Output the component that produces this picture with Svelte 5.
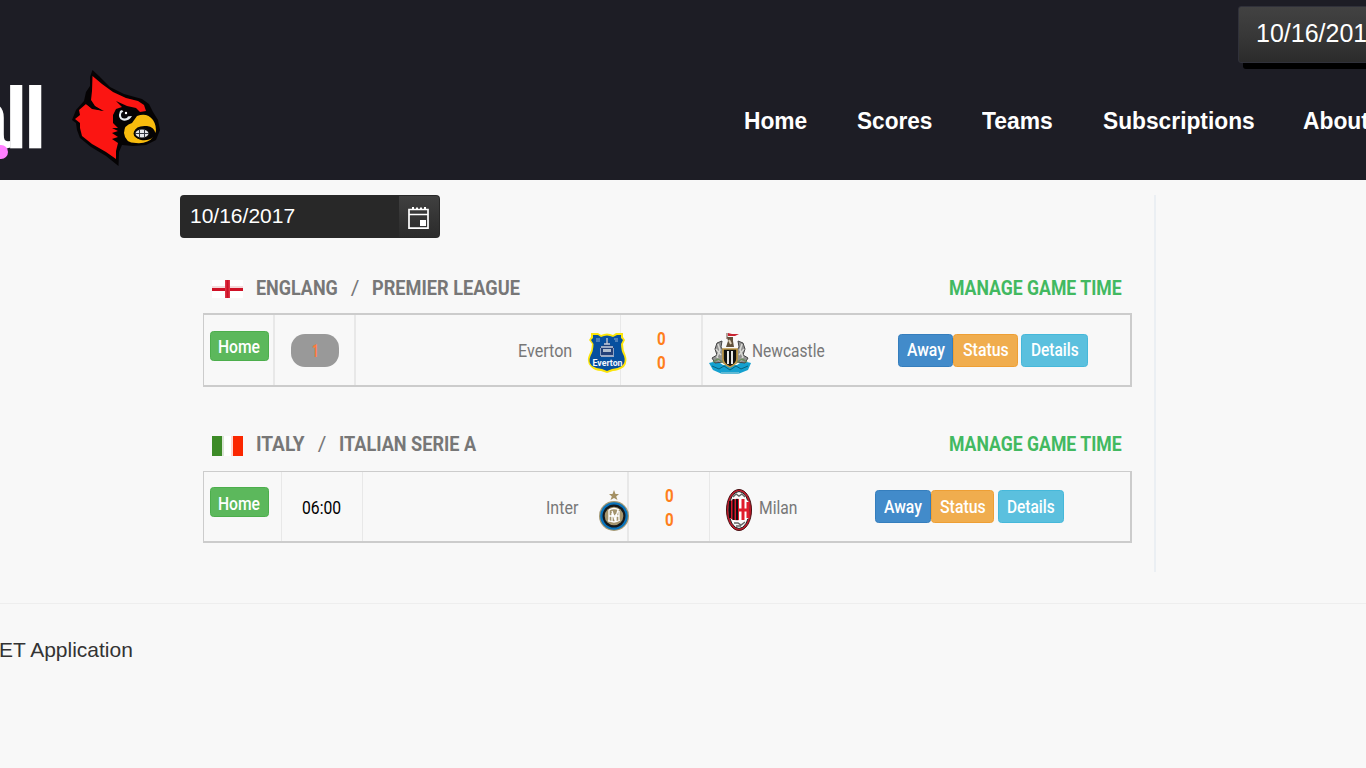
<script>
  // Condenses a label horizontally so that it fills its box exactly.
  function fit(node) {
    const box = node.parentElement.clientWidth;
    const natural = node.offsetWidth;
    if (natural) node.style.transform = `scaleX(${box / natural})`;
  }

  const nav = [
    { text: 'Home', w: 63, gap: 50 },
    { text: 'Scores', w: 75, gap: 50 },
    { text: 'Teams', w: 71, gap: 50 },
    { text: 'Subscriptions', w: 152, gap: 48 },
    { text: 'About', w: 66, gap: 0 }
  ];

  const leagues = [
    {
      key: 'eng', country: 'ENGLANG', cw: 82, name: 'PREMIER LEAGUE', nw: 148,
      home: 'Everton', hw: 54, away: 'Newcastle', aw: 73, live: '1'
    },
    {
      key: 'ita', country: 'ITALY', cw: 49, name: 'ITALIAN SERIE A', nw: 137,
      home: 'Inter', hw: 32, away: 'Milan', aw: 38, time: '06:00'
    }
  ];
</script>

{#snippet label(text, w)}
  <span class="fit" style="width:{w}px"><span class="inner" use:fit>{text}</span></span>
{/snippet}

<div class="page">
  <header>
    <div class="brand">
      <span class="word">all</span>
      <span class="dot"></span>
    </div>
    <svg class="bird" width="90" height="98" viewBox="72 68 90 98">
      <path d="M92.500 70 L99 76 L110 87 L124 94 L142 99 L149 104 L153 112 L158 120 L160 130 L156 140 L146 145 L133 146 L122 145 L119 152 L118.500 166 L106 156 L91 147 L80 138 L77 130 L76 123 L72 120 L76 110 L84 101 L86 92 L90 86 L90 77Z" fill="#050304"/>
      <path d="M92.500 76 L102 84 L113 92 L126 98 L138 101 L144 105 L146 111 L140 112 L136 108 L127 106 L116 101 L122 107 L116 109 L113 115 L113 123 L118 128 L112 128 L118 131 L112 133 L118 137 L112 139 L118 143 L116 151 L116 159 L106 152 L92 144 L82 136 L80 128 L80 123 L75 119 L80 115 L79 110 L86 104 L92 108 L103 111 L95 106 L91 100 L92 91Z" fill="#fb1512"/>
      <path d="M90 99L94 106L104 111L92 109L86 104Z" fill="#050304"/>
      <path d="M137 116 Q147 112 153 120 Q157 126 155.500 133 Q154 127 147 126 Q136 125 134 132 Q134 138 141 140 Q149 141 153 137 Q148 144 136 143 Q125 143 124 133 Q124 125 132 123Z" fill="#f8bb0d"/>
      <path d="M120 111 Q117 119 123 120.500 Q129 121.500 132 116 L127 116.500 L122 110Z" fill="#e7edf1"/>
      <circle cx="124.500" cy="115" r="3.500" fill="#07080b"/><circle cx="126" cy="113" r="1.200" fill="#fff"/>
      <ellipse cx="142" cy="133.500" rx="7.500" ry="5" fill="#e5e7eb" stroke="#090808" stroke-width="2"/>
      <path d="M135 133.500H149M139.500 129V138M144.500 129V138" stroke="#333740" stroke-width="1"/>
    </svg>
    <nav>
      {#each nav as n}
        <a style="margin-right:{n.gap}px">{@render label(n.text, n.w)}</a>
      {/each}
    </nav>
    <div class="corner">10/16/2017</div>
  </header>

  <main>
    <div class="content">
      <div class="picker">
        <span>10/16/2017</span>
        <div class="pick">
          <svg width="24" height="24" viewBox="0 0 24 24" fill="none" stroke="#fff" stroke-width="1.700">
            <path d="M3 3.500H22V22.200H3ZM3 8.500H22" />
            <path d="M7 1V4M11 1.500V4M15 1.500V4M19 1V4" stroke-width="2" />
            <path d="M14 14H20V20H14Z" fill="#fff" stroke="none" />
          </svg>
        </div>
      </div>

      {#each leagues as g}
        <section class={g.key}>
          <h2>
            {#if g.key === 'eng'}
              <svg class="flag" width="31" height="18" viewBox="0 0 31 18">
                <rect width="31" height="18" fill="#fff"/><path d="M0 7H31" stroke="#f4d9db" stroke-width="2"/>
                <path d="M0 9.500H31" stroke="#cf1126" stroke-width="3"/><path d="M15.500 0V18" stroke="#dc3446" stroke-width="5"/><path d="M15.500 0V18" stroke="#cf1126" stroke-width="2"/>
              </svg>
            {:else}
              <svg class="flag" width="31" height="20" viewBox="0 0 31 20">
                <rect width="31" height="20" fill="#fff"/><rect width="10" height="20" fill="#3d8b27"/><rect x="10" width="2" height="20" fill="#dbe6d6"/><rect x="19" width="2" height="20" fill="#ffd9d3"/><rect x="21" width="10" height="20" fill="#fb2700"/>
              </svg>
            {/if}
            {@render label(g.country, g.cw)}
            <i>/</i>
            {@render label(g.name, g.nw)}
            <a class="manage">{@render label('MANAGE GAME TIME', 173)}</a>
          </h2>

          <div class="row">
            <div class="cell first"><button class="btn green">{@render label('Home', 42)}</button></div>
            <div class="cell when">
              {#if g.live}
                <span class="pill">{@render label(g.live, 7)}</span>
              {:else}
                {@render label(g.time, 39)}
              {/if}
            </div>
            <div class="cell host">
              {@render label(g.home, g.hw)}
              {#if g.key === 'eng'}
                <svg width="40" height="42" viewBox="0 0 40 42">
                  <path d="M4 1H11L14 3Q20 0 26 3L29 1H36V5L38 8L36 12Q36 18 38.500 23Q41 30 37 35Q31 39 26 39L20 41L14 39Q8 39 4 35Q-1 30 2 23Q5 18 5 12L2 8L4 5Z" fill="#fce50a"/>
                  <path d="M6 3H11L14 5Q20 2 26 5L30 3H34V6L36 8L34 12Q34 19 37 24Q39 30 35 34Q30 37 25 37L20 39L15 37Q10 37 5 34Q1 30 3.500 24Q6.500 19 6.500 12L4 8L6 6Z" fill="#07509f"/>
                  <path d="M13 25V15L17 13L20 7L23 13L27 15V25Z" fill="#244078"/>
                  <path d="M14 15H26M14 24H27M17 12H23M20 6V12" stroke="#c3cede" stroke-width="1.300"/>
                  <path d="M13.500 16V24M26.500 16V24" stroke="#8ea3c4" stroke-width="1"/>
                  <path d="M16 17H24V20H16Z" fill="#b3bfce"/>
                  <path d="M9 7H13M9 9H13M27 7H31M28 9H31" stroke="#91afd2" stroke-width="1"/>
                  <text x="5.500" y="34" textLength="30" lengthAdjust="spacingAndGlyphs" fill="#f3f7fc" font-size="9" font-weight="700">Everton</text>
                </svg>
              {:else}
                <svg width="30" height="42" viewBox="0 0 30 42">
                  <path d="M15 0L16.500 4H20L17.200 6.400L18.500 10L15 8L11.500 10L12.800 6.400L10 4H13.500Z" fill="#a49063"/>
                  <circle cx="15" cy="26" r="15" fill="#a49873"/><circle cx="15" cy="26" r="13.800" fill="#0872ba"/><circle cx="15" cy="26" r="11.500" fill="#15191b"/><circle cx="15" cy="26" r="9.300" fill="#a3946d"/>
                  <path d="M10 20V32M13 21L16 30L19 20M20 21V31M9 30Q15 34 21 30M10 20Q15 17 20 20M13 32V23M17 32V24M10 26H20" fill="none" stroke="#fff" stroke-width="1.300"/>
                </svg>
              {/if}
            </div>
            <div class="cell score">
              {@render label('0', 9)}
              {@render label('0', 9)}
            </div>
            <div class="cell guest">
              {#if g.key === 'eng'}
                <svg width="42" height="43" viewBox="0 0 42 43">
                  <path d="M0 31L8 29L14 33H28L34 29L42 31L39 38L29 42H13L4 38Z" fill="#14a0cf"/>
                  <path d="M3 34L10 37L15 34L21 38L27 34L32 37L39 34" fill="none" stroke="#0a617b" stroke-width="1"/>
                  <path d="M12 41H30" stroke="#8ac9d8" stroke-width="1.300"/>
                  <path d="M8 11L13 9L12 15L15 20L14 30L6 31L3 26L8 23L6 17ZM34 11L29 9L30 15L27 20L28 30L36 31L39 26L34 23L36 17Z" fill="#929292" stroke="#454545" stroke-width="1"/>
                  <path d="M9 12L11 18L8 25L11 29M33 12L31 18L34 25L31 29M7 17L12 23M35 17L30 23" fill="none" stroke="#d8d8d4" stroke-width="1.500"/>
                  <path d="M4 30L9 27L15 31H27L33 27L38 30" fill="none" stroke="#6c8b61" stroke-width="1.500"/>
                  <path d="M14 17H28V27Q28 32 21 35Q14 32 14 27Z" fill="#111" stroke="#bd9645" stroke-width="1.700"/>
                  <path d="M19 19V32M23 19V32" stroke="#fff" stroke-width="1.800"/>
                  <path d="M17 15L19 9L18 5H24V9L25 15Z" fill="#62523d"/><path d="M20 8L22 12" stroke="#ddd0b8" stroke-width="2"/>
                  <path d="M18 1V7" stroke="#6b4b3d"/><path d="M19 1L23 2H30L26 4L19 4Z" fill="#c92331"/>
                </svg>
              {:else}
                <svg width="26" height="42" viewBox="0 0 26 42">
                  <ellipse cx="13" cy="21" rx="12.500" ry="20.500" fill="#c4192a" stroke="#451013"/><ellipse cx="13" cy="21" rx="10.300" ry="18.500" fill="#fafafa" stroke="#222"/>
                  <path d="M3 13Q8 9 13 10V31Q7 32 3 28Z" fill="#d9172b"/><path d="M4 12V29M7.500 10V31M11 10V31" stroke="#120d10" stroke-width="2"/>
                  <path d="M13 10Q19 9 23 13V29Q19 32 13 31Z" fill="#fff"/><path d="M17 10V31M13 21H23M22 13V29" stroke="#e01c2c" stroke-width="3"/>
                  <path d="M7 8L10 5L13 7L16 5L19 8M8 34H12L15 36L19 33M10 37H15" fill="none" stroke="#666" stroke-width="1.500"/>
                </svg>
              {/if}
              {@render label(g.away, g.aw)}
              <div class="actions">
                <button class="btn blue">{@render label('Away', 38)}</button>
                <button class="btn orange">{@render label('Status', 46)}</button>
                <button class="btn cyan">{@render label('Details', 48)}</button>
              </div>
            </div>
          </div>
        </section>
      {/each}
    </div>
  </main>
  <footer>ET Application</footer>
</div>

<style>
  :global(body) { margin: 0; background: #f8f8f8; overflow: hidden; }
  .page { width: 1366px; height: 768px; overflow: hidden; background: #f8f8f8; font-family: Roboto, "Liberation Sans", sans-serif; }
  * { box-sizing: border-box; }
  svg { display: block; flex: none; }
  .fit { display: block; flex: none; white-space: nowrap; }
  .inner { display: inline-block; transform-origin: 0 50%; vertical-align: top; }

  header { position: relative; display: flex; align-items: flex-start; height: 180px; overflow: hidden; background: #1d1d25; font-family: "Liberation Sans", Arial, sans-serif; }
  .brand { position: relative; width: 72px; height: 180px; display: flex; justify-content: flex-end; padding: 68px 35px 0 0; flex: none; }
  .word { color: #fff; font-size: 88px; line-height: 100px; font-weight: 700; letter-spacing: -5.5px; margin-right: -5px; }
  .dot { position: absolute; left: -8px; top: 145px; width: 16px; height: 14px; border-radius: 7px; background: #ff80ff; }
  .bird { margin-top: 68px; }
  nav { display: flex; margin: 106px 0 0 582px; color: #fff; font-size: 23.5px; line-height: 30px; font-weight: 700; }
  .corner { position: absolute; left: 1238px; top: 6px; width: 160px; height: 57px; padding-left: 17px; border-radius: 3px; border: 1px solid #30313a; background: linear-gradient(#424242, #383838 50%, #2b2b2b); box-shadow: 5px 6px 0 #000; color: #fff; font-size: 25px; line-height: 53px; }

  main { height: 424px; padding: 15px 0 0 180px; border-bottom: 1px solid #eee; }
  .content { width: 976px; height: 377px; border-right: 2px solid #ebeff3; }
  .picker { display: flex; justify-content: space-between; width: 260px; height: 43px; padding: 1px; border-radius: 4px; background: #282828; color: #fff; font: 21px/39px "Liberation Sans", Arial, sans-serif; }
  .picker > span { padding-left: 9px; }
  .pick { width: 40px; padding: 10px 0 0 7px; border-radius: 0 3px 3px 0; background: linear-gradient(#404040, #353535 50%, #2b2b2b); }

  section { width: 929px; margin-left: 23px; }
  .eng { padding-top: 35px; height: 149px; }
  .ita { padding-top: 42px; height: 156px; }
  h2 { display: flex; margin: 0; padding: 0 9px; height: 40px; font-size: 21px; line-height: 30px; font-weight: 700; color: #777; }
  .ita h2 { height: 42px; }
  .flag { margin: 7px 13px 0 0; }
  h2 i { width: 34px; text-align: center; font-style: normal; font-weight: 400; }
  .manage { margin: 0 1px 0 auto; color: #42b961; }

  .row { display: grid; width: 929px; border: 2px solid #ccc; border-left-width: 1px; color: #777; font-size: 18.5px; line-height: 24px; }
  .eng .row { height: 74px; grid-template-columns: 69px 81px 266px 81px 429px; }
  .ita .row { height: 72px; border-top-width: 1px; grid-template-columns: 77px 81px 265px 82px 421px; }
  .cell { display: flex; align-items: flex-start; border-left: 2px solid #e8e8e8; }
  .eng .score, .ita .when, .ita .host, .ita .guest { border-left-width: 1px; }
  .cell.first { border-left: 0; padding: 16px 0 0 6px; }
  .ita .first { padding-top: 15px; }

  .btn { display: flex; align-items: center; justify-content: center; height: 33px; padding: 0 0 1px; border: 1.500px solid; border-radius: 3.500px; color: #fff; font: 500 19px/24px Roboto, sans-serif; }
  .green { width: 59px; height: 30px; padding: 2px 2px 0 0; background: #5cb85c; border-color: #4cae4c; }
  .ita .green { padding-top: 4px; }
  .blue { width: 55px; background: #428bca; border-color: #357ebd; }
  .orange { width: 65px; background: #f0ad4e; border-color: #ee9f34; }
  .cyan { width: 67px; margin-left: 3px; background: #5bc0de; border-color: #46b8da; }
  .ita .btn:not(.green) { padding: 1px 0 0; }
  .ita .blue { width: 56px; }
  .ita .orange { width: 63px; }
  .ita .cyan { width: 66px; margin-left: 4px; }

  .pill { display: flex; align-items: center; justify-content: center; width: 48px; height: 33px; margin: 19px 0 0 16px; border-radius: 14px; background: #999; color: #ff7b3c; font-weight: 700; }
  .ita .when { padding: 24px 0 0 20px; color: #000; }
  .host { justify-content: flex-end; padding-top: 24px; }
  .host svg { position: relative; z-index: 1; }
  .eng .host svg { margin: -7px -7px 0 15px; }
  .ita .host svg { margin: -6px -2px 0 21px; }
  .score { flex-direction: column; align-items: center; padding-top: 12px; color: #ff7f1c; font-weight: 700; }
  .guest { padding: 24px 0 0 6px; }
  .eng .guest svg { margin: -7px 1px 0 0; }
  .ita .guest { padding: 24px 0 0 16px; }
  .ita .guest svg { margin: -7px 7px 0 0; }
  .actions { display: flex; margin: -5px 0 0 73px; }
  .ita .actions { margin: -6px 0 0 78px; }
  footer { padding-top: 31px; margin-left: -1px; color: #333; font: 21px/30px "Liberation Sans", Arial, sans-serif; }
</style>
